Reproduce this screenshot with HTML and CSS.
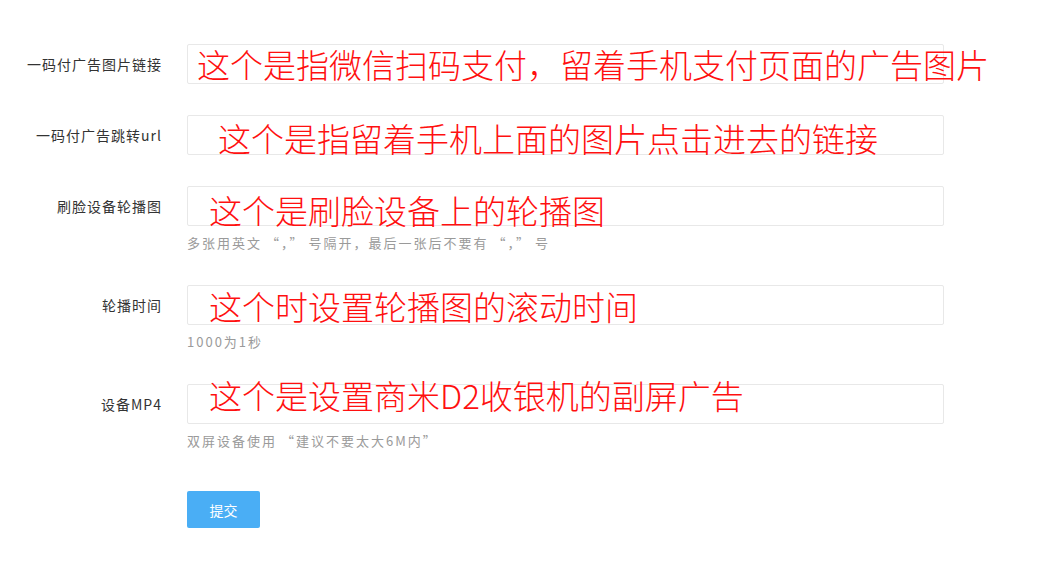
FILE: index.html
```html
<!DOCTYPE html>
<html lang="zh-CN">
<head>
  <meta charset="UTF-8">
  <title>广告设置</title>
  <link rel="stylesheet" href="styles.css">
</head>
<body>
  <form class="form" onsubmit="return false">
    <div class="form-item">
      <label class="form-label">一码付广告图片链接</label>
      <div class="form-block">
        <div class="field">
          <input class="form-input" type="text">
          <span class="note note-1">这个是指微信扫码支付，留着手机支付页面的广告图片</span>
        </div>
      </div>
    </div>

    <div class="form-item">
      <label class="form-label">一码付广告跳转url</label>
      <div class="form-block">
        <div class="field">
          <input class="form-input" type="text">
          <span class="note note-2">这个是指留着手机上面的图片点击进去的链接</span>
        </div>
      </div>
    </div>

    <div class="form-item">
      <label class="form-label">刷脸设备轮播图</label>
      <div class="form-block">
        <div class="field">
          <input class="form-input" type="text">
          <span class="note note-3">这个是刷脸设备上的轮播图</span>
        </div>
        <div class="form-tip">多张用英文<span class="q">“，”</span>号隔开，最后一张后不要有<span class="q">“，”</span>号</div>
      </div>
    </div>

    <div class="form-item">
      <label class="form-label">轮播时间</label>
      <div class="form-block">
        <div class="field">
          <input class="form-input" type="text">
          <span class="note note-4">这个时设置轮播图的滚动时间</span>
        </div>
        <div class="form-tip">1000为1秒</div>
      </div>
    </div>

    <div class="form-item">
      <label class="form-label">设备MP4</label>
      <div class="form-block">
        <div class="field">
          <input class="form-input" type="text">
          <span class="note note-5">这个是设置商米D2收银机的副屏广告</span>
        </div>
        <div class="form-tip">双屏设备使用<span class="q-open">“</span>建议不要太大6M内”</div>
      </div>
    </div>

    <div class="form-item form-actions">
      <div class="form-block">
        <button class="btn" type="submit">提交</button>
      </div>
    </div>
  </form>
</body>
</html>
```

FILE: styles.css
```css
body {
  margin: 0;
  background: #fff;
  font-family: "Microsoft YaHei", "Noto Sans CJK SC", "Noto Sans", sans-serif;
  color: #333;
}
.form {
  padding-top: 44px;
}
.form-item {
  display: flex;
  margin-bottom: 31px;
}
.form-item:has(.form-tip) {
  margin-bottom: 32px;
}
.form-label {
  width: 162px;
  margin-right: 25px;
  line-height: 40px;
  font-size: 14px;
  letter-spacing: 1px;
  text-align: right;
  color: #333;
  white-space: nowrap;
}
.form-block {
  width: 757px;
}
.form-actions {
  margin-top: 40px;
  padding-left: 187px;
}
.field {
  position: relative;
}
.form-input {
  display: block;
  box-sizing: border-box;
  width: 100%;
  height: 40px;
  padding: 0 10px;
  border: 1px solid #e8e8e8;
  border-radius: 2px;
  background: #fff;
  outline: none;
}
.form-tip {
  padding-top: 7px;
  line-height: 20px;
  font-size: 13px;
  letter-spacing: 2px;
  color: #9a9a9a;
  white-space: nowrap;
}
.form-tip .q {
  margin: 0 4px;
}
.form-tip .q-open {
  margin-left: 4px;
}

/* red notes written over the screenshot */
.note {
  position: absolute;
  white-space: nowrap;
  color: #ff1010;
  font-size: 33px;
  font-weight: 300;
  line-height: 33px;
  pointer-events: none;
}
.note-1 { left: 10px; top: 4px; }
.note-2 { left: 31px; top: 7px; }
.note-3 { left: 22px; top: 8px; }
.note-4 { left: 22px; top: 5px; }
.note-5 { left: 22px; top: -5px; }

.btn {
  width: 73px;
  height: 37px;
  border: none;
  border-radius: 2px;
  background: #4aaef5;
  color: #fff;
  font-family: inherit;
  font-size: 14px;
  cursor: pointer;
}
```
